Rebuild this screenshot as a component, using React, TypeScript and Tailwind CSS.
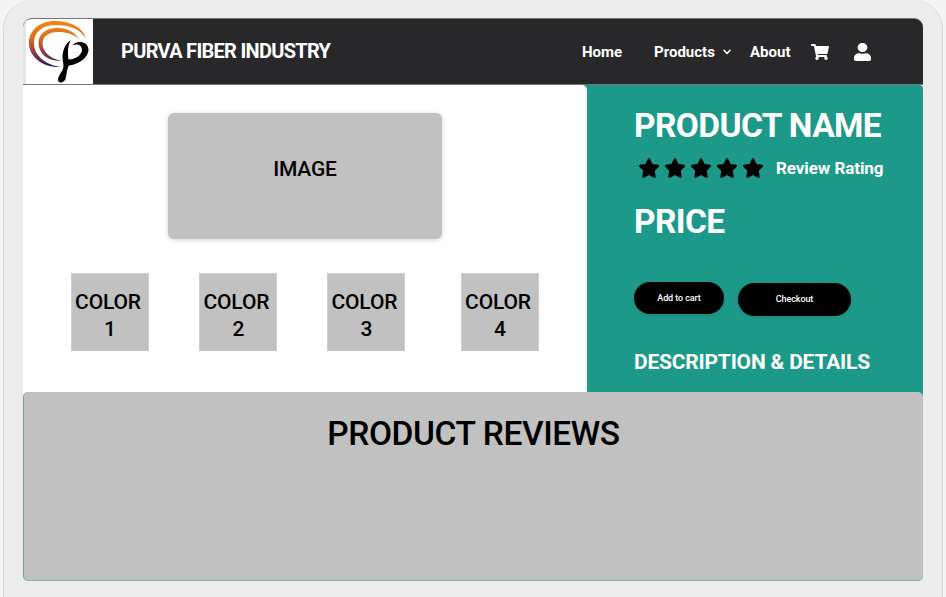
import React from "react";
import { FaStar } from "react-icons/fa6";
import { FaShoppingCart, FaUser } from "react-icons/fa";

function Logo() {
  return (
    <svg viewBox="26 19 67 65" className="block h-[65px] w-[67px] shrink-0">
      <defs>
        <linearGradient id="swirl" gradientUnits="userSpaceOnUse" x1="0" y1="21" x2="0" y2="68">
          <stop offset="0" stopColor="#f0860f" />
          <stop offset="0.35" stopColor="#de701a" />
          <stop offset="0.65" stopColor="#8a4048" />
          <stop offset="1" stopColor="#230d5c" />
        </linearGradient>
      </defs>
      <rect x="26" y="19" width="67" height="65" fill="#fff" />
      <path
        d="M86 38.500C83 28 71 21 55 21C39 21 29 31 29 43C29 57 43 68 61 67C46 65 34 56 34 43C34 32 42 25 56 25C70 25 80 29 86 38.500Z"
        fill="url(#swirl)"
      />
      <path
        d="M79 39.500C75 32 67 28 58 28C46 28 38.500 34 38.500 43C38.500 54 49 62 61 60.500C51 59 42.500 52 42.500 43.500C42.500 36 49 32 58 32C67 32 74 34 79 39.500Z"
        fill="url(#swirl)"
      />
      <path
        d="M70.500 40.500C66 43 63 49 62.500 56C62.500 63 65 66 62 71C60 74 58 77 58 80C58.500 84 64 83 65.500 79C67 74 66.500 69 69 65.500C77 65 88.500 58 88.500 49.500C88 41 76 40 72.500 45.500C77 43 82 45 82 50C82 55 75 59.500 68.500 59.500C67.500 51 68 46 70.500 40.500Z"
        fill="#000"
      />
    </svg>
  );
}

function ChevronDown() {
  return (
    <svg viewBox="0 0 8 6" className="h-[6px] w-[8px]" fill="none" stroke="#fff" strokeWidth="1.5" strokeLinecap="round" strokeLinejoin="round">
      <path d="M1 1.200L4 4.400L7 1.200" />
    </svg>
  );
}

function Header() {
  return (
    <header className="flex h-[67px] items-start overflow-hidden rounded-t-[9px] border-y border-[#77777a] bg-[#28282a] font-bold text-white">
      <div className="flex h-[65px] w-[70px] shrink-0 border-l-[3px] border-[#e5e5e5]">
        <Logo />
      </div>
      <h1 className="ml-[28px] mt-[18px] w-[461px] whitespace-nowrap text-[20px] leading-7 tracking-[-0.72px]">PURVA FIBER INDUSTRY</h1>
      <nav className="mt-[21px] flex h-6 items-center whitespace-nowrap text-[15px] leading-6">
        <a className="w-[72px]">Home</a>
        <a className="w-[69px]">Products</a>
        <span className="w-[27px]"><ChevronDown /></span>
        <a className="w-[61px]">About</a>
        <span className="w-[43px]"><FaShoppingCart className="h-[16px] w-[18px]" /></span>
        <FaUser className="h-[18px] w-[17px]" preserveAspectRatio="none" />
      </nav>
    </header>
  );
}

const colors = [
  { n: 1, gap: "ml-[48px]" },
  { n: 2, gap: "ml-[50.400px]" },
  { n: 3, gap: "ml-[50px]" },
  { n: 4, gap: "ml-[55.600px]" },
];

function Gallery() {
  return (
    <section className="w-[564px] shrink-0 rounded-tr-[5px] bg-white pt-[28px] text-[21px] font-medium leading-[27px] tracking-[-0.15px]">
      <div className="ml-[145px] h-[126px] w-[274px] rounded-[6px] bg-[#c1c1c1] pt-[43px] text-center shadow-[0_1px_5px_rgba(0,0,0,0.18)]">
        IMAGE
      </div>
      <div className="mt-[34px] flex">
        {colors.map(({ n, gap }) => (
          <div key={n} className={`${gap} h-[78px] w-[78px] border border-b-0 border-[#cecece] bg-[#c1c1c1] pt-[15px]`}>
            <div className="w-[72px] text-center">COLOR</div>
            <div className="w-[76px] text-center">{n}</div>
          </div>
        ))}
      </div>
    </section>
  );
}

function Details() {
  return (
    <section className="flex-1 whitespace-nowrap pl-[47px] pt-[21px] font-bold text-white">
      <h2 className="h-10 text-[33.500px] leading-10 tracking-[-0.6px]">PRODUCT NAME</h2>
      <div className="mt-[10px] flex h-6 items-center">
        <div className="ml-[4px] flex w-[138px] gap-[4px] text-black">
          {[1, 2, 3, 4, 5].map((n) => (
            <FaStar key={n} className="size-[22px]" />
          ))}
        </div>
        <span className="text-[17px] leading-6 tracking-[-0.08px]">Review Rating</span>
      </div>
      <h2 className="mt-[22px] h-10 text-[33.500px] leading-10 tracking-[-0.6px]">PRICE</h2>
      <div className="mt-[40px] flex h-[34px] text-[9px] font-medium">
        <button className="h-[32px] w-[90px] rounded-full bg-black pt-px tracking-[-0.1px] shadow-[0_1px_4px_rgba(0,0,0,0.12)]">Add to cart</button>
        <button className="ml-[14px] mt-[1px] h-[33px] w-[113px] rounded-full bg-black pt-px tracking-[-0.1px] shadow-[0_1px_4px_rgba(0,0,0,0.12)]">Checkout</button>
      </div>
      <h3 className="mt-[32px] text-[21px] leading-7 tracking-[-0.2px]">DESCRIPTION &amp; DETAILS</h3>
    </section>
  );
}

export default function App() {
  return (
    <div className="h-[597px] w-[946px] overflow-hidden bg-[#f4f4f4] px-[3px] font-['Roboto',sans-serif] text-black">
      <div className="h-[640px] rounded-t-[29px] border border-t-0 border-[#d4d4d4] bg-[#ececec] px-[19px] pt-[18px]">
        <main className="w-[900px]">
          <Header />
          <div className="rounded-b-[6px] rounded-tr-[4px] bg-[#1d998a]">
            <div className="flex h-[307px]">
              <Gallery />
              <Details />
            </div>
            <div className="rounded-b-[6px] bg-[linear-gradient(to_right,#fff_564px,#1d998a_564px)]">
              <section className="h-[189px] rounded-[5px] border-b border-l border-b-[#82b3ab] border-l-[#67a69c] bg-[#c1c1c1] pt-[22px] text-center text-[33.500px] font-medium leading-10 tracking-[-0.4px]">
                PRODUCT REVIEWS
              </section>
            </div>
          </div>
        </main>
      </div>
    </div>
  );
}
